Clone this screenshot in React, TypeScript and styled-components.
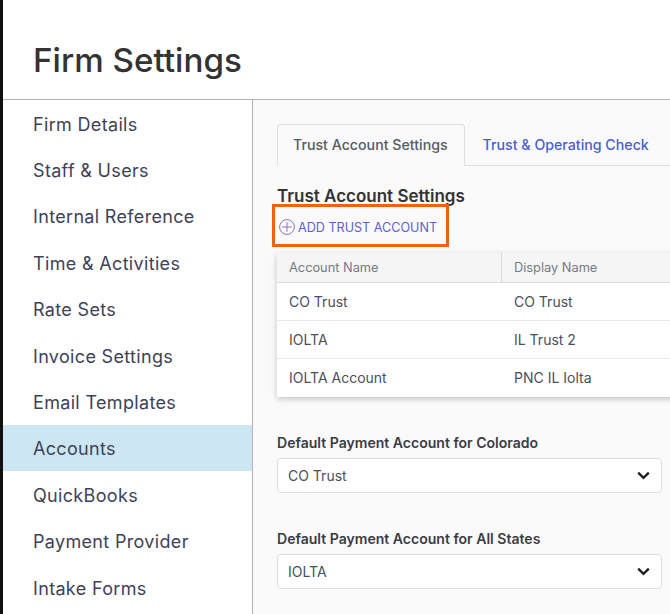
import React from "react";
import styled, { createGlobalStyle } from "styled-components";

const Global = createGlobalStyle`
  html, body { margin: 0; padding: 0; height: 100%; overflow: hidden; background: #fff; }
  body { font-family: Inter, "Liberation Sans", sans-serif; }
  * { box-sizing: border-box; }
`;
const Page = styled.div`
  width: 670px; height: 614px; border-left: 3px solid #111; display: flex; flex-direction: column; overflow: hidden;
`;
const Header = styled.header`
  height: 100px; flex: none; border-bottom: 1px solid #b4b4b4; padding: 40px 0 0 30px;
`;
const Title = styled.h1`
  margin: 0; font-size: 33.2px; line-height: 41px; font-weight: 500; color: #333;
`;
const Body = styled.div`
  flex: 1; display: flex; min-height: 0;
`;
const Sidebar = styled.nav`
  width: 250px; flex: none; border-right: 1px solid #b4b4b4; display: flex; flex-direction: column;
`;
const NavItem = styled.div<{ $active?: boolean }>`
  height: 46.4px; flex: none; display: flex; align-items: center; padding: 2px 0 0 30px;
  font-size: 18px; letter-spacing: 0.33px; color: #3f4256; background: ${(p) => (p.$active ? "#cce7f3" : "transparent")};
`;
const Main = styled.main`
  flex: 1; min-width: 0; background: #fafafa; padding: 24px 0 0 24px; overflow: hidden;
`;
const Tabs = styled.div`
  display: flex; gap: 2px; height: 42px; border-bottom: 1px solid #dedede; align-items: stretch; margin-right: -1px;
`;
const Tab = styled.div<{ $active?: boolean }>`
  display: flex; align-items: center; padding: 0 16px 2px 15px; font-size: 14.2px; font-weight: 500; margin-bottom: -1px;
  color: ${(p) => (p.$active ? "#565b66" : "#4a5fcf")};
  border: 1px solid ${(p) => (p.$active ? "#dedede" : "transparent")};
  border-bottom-color: ${(p) => (p.$active ? "#fafafa" : "transparent")};
  border-radius: 4px 4px 0 0;
`;
const SectionTitle = styled.h2`
  margin: 20px 0 0; font-size: 17px; line-height: 20px; font-weight: 600; color: #333;
`;
const AddArea = styled.div`
  position: relative; height: 36px; display: flex; align-items: center; margin-top: 3px;
`;
const AddButton = styled.div`
  display: flex; align-items: center; gap: 3px; padding-left: 2px; font-size: 12.6px; color: #5d5fd0;
`;
const Highlight = styled.div`
  position: absolute; left: -5px; top: -5px; width: 177px; height: 43px; border: 3px solid #f0620f; pointer-events: none;
`;
const Table = styled.div`
  width: 420px; background: #fff; box-shadow: 0 2px 6px rgba(0,0,0,.22); margin-top: 8px;
`;
const HeaderRow = styled.div`
  display: grid; grid-template-columns: 224px 1fr; height: 30px; background: #f5f5f5; border-bottom: 1px solid #dcdcdc;
`;
const HeaderCell = styled.div`
  display: flex; align-items: center; padding-left: 12px; font-size: 12.8px; color: #757a85;
  & + & { border-left: 1px solid #dcdcdc; padding-left: 12px; }
`;
const Row = styled.div`
  display: grid; grid-template-columns: 224px 1fr; height: 38px; border-bottom: 1px solid #e9e9e9;
  &:last-child { border-bottom: 0; }
`;
const Cell = styled.div`
  display: flex; align-items: center; padding: 0 0 1px 12px; font-size: 14px; color: #4a4f5c;
  & + & { padding-left: 13px; }
`;
const Field = styled.div`
  margin-top: 37px; width: 385px;
`;
const Label = styled.div`
  font-size: 14.05px; line-height: 17px; font-weight: 600; color: #3c3c44; margin-bottom: 7px;
`;
const Select = styled.div`
  height: 35px; background: #fff; border: 1px solid #dcdcdc; border-radius: 4px; display: flex; align-items: center;
  justify-content: space-between; padding: 0 11px 1px 10px; font-size: 14px; color: #4a4f5c;
`;

const nav = ["Firm Details","Staff & Users","Internal Reference","Time & Activities","Rate Sets","Invoice Settings","Email Templates","Accounts","QuickBooks","Payment Provider","Intake Forms"];
const rows = [["CO Trust","CO Trust"],["IOLTA","IL Trust 2"],["IOLTA Account","PNC IL Iolta"]];

const Chevron = () => (
  <svg width="13" height="9" viewBox="0 0 13 9" fill="none"><path d="M1.2 1.6 6.5 6.8l5.3-5.2" stroke="#222" strokeWidth="2.4" /></svg>
);
const PlusCircle = () => (
  <svg width="16" height="16" viewBox="0 0 16 16" fill="none" stroke="#8f6fd8" strokeWidth="1"><circle cx="8" cy="8" r="7.4" /><path d="M8 3.2v9.6M3.2 8h9.6" /></svg>
);

export default function App() {
  return (
    <Page>
      <Global />
      <Header><Title>Firm Settings</Title></Header>
      <Body>
        <Sidebar>
          {nav.map((n) => <NavItem key={n} $active={n === "Accounts"}>{n}</NavItem>)}
        </Sidebar>
        <Main>
          <Tabs>
            <Tab $active>Trust Account Settings</Tab>
            <Tab>Trust &amp; Operating Check</Tab>
          </Tabs>
          <SectionTitle>Trust Account Settings</SectionTitle>
          <AddArea>
            <AddButton><PlusCircle />ADD TRUST ACCOUNT</AddButton>
            <Highlight />
          </AddArea>
          <Table>
            <HeaderRow><HeaderCell>Account Name</HeaderCell><HeaderCell>Display Name</HeaderCell></HeaderRow>
            {rows.map((r) => <Row key={r[0]}><Cell>{r[0]}</Cell><Cell>{r[1]}</Cell></Row>)}
          </Table>
          <Field>
            <Label>Default Payment Account for Colorado</Label>
            <Select>CO Trust<Chevron /></Select>
          </Field>
          <Field>
            <Label>Default Payment Account for All States</Label>
            <Select>IOLTA<Chevron /></Select>
          </Field>
        </Main>
      </Body>
    </Page>
  );
}
